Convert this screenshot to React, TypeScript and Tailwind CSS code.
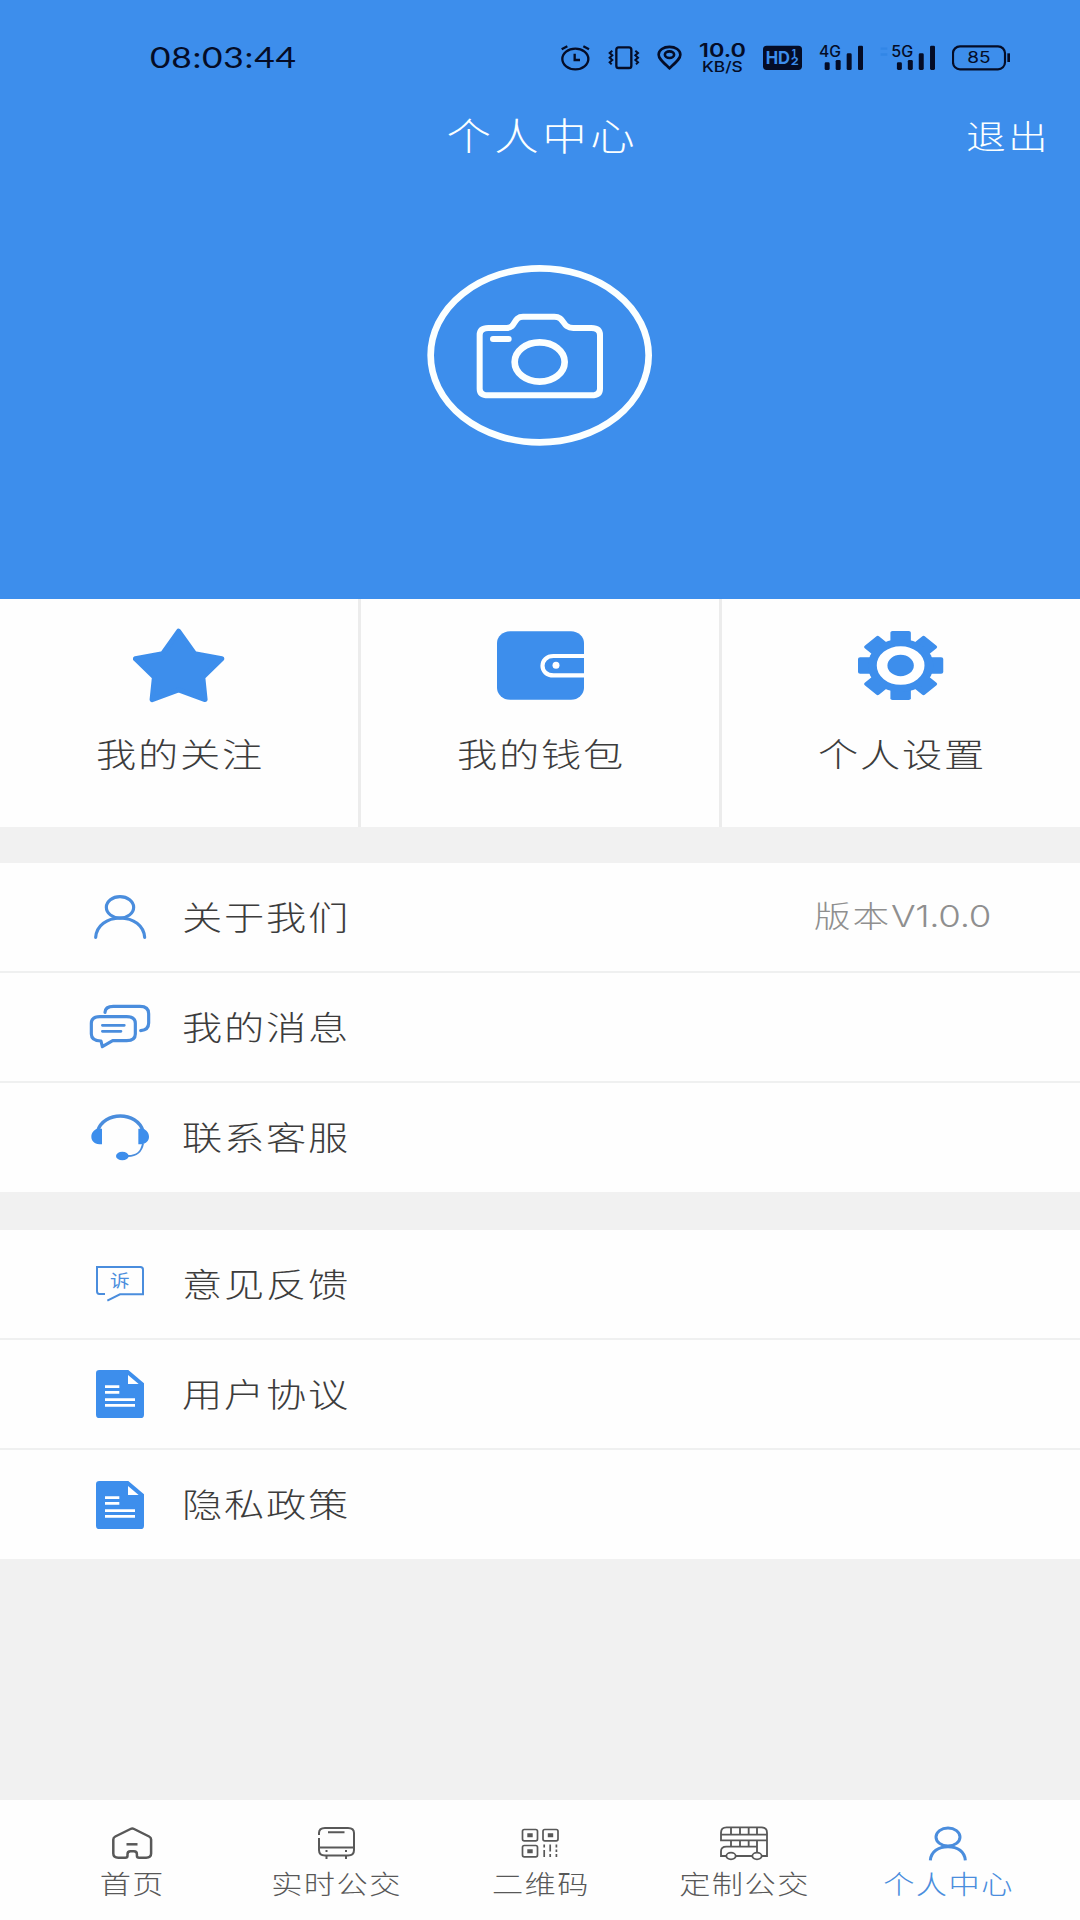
import type { ReactNode } from "react";
import { clsx } from "clsx";

const BLUE = "#3d8eec";

/* ---------- status bar ---------- */

const StatusBar = () => (
  <div className="flex h-[92px] items-center pt-[23px] text-[#040c26]">
    <div className="ml-[150px] w-[410px]">
      <span className="inline-block origin-left scale-x-[1.22] font-['Lato'] text-[29px] leading-none font-normal tracking-[0.6px]">
        08:03:44
      </span>
    </div>
    <div className="flex items-center gap-[17px]">
      <svg width="31" height="32" viewBox="62 66 93 96" fill="none" stroke="currentColor" strokeWidth="7">
        <ellipse cx="108" cy="117" rx="39" ry="31" />
        <path d="M106 101v19h16M67 88l17-9M149 88l-17-9" />
      </svg>
      <svg width="32" height="32" viewBox="203 66 96 96" fill="none" stroke="currentColor" strokeWidth="7">
        <rect x="228" y="82" width="45" height="62" rx="7" />
        <path d="M216 92l-8 7 8 7-8 7 8 7-8 7 6 6M285 92l8 7-8 7 8 7-8 7 8 7-6 6" strokeWidth="6" />
      </svg>
      <svg width="25" height="32" viewBox="349 66 76 96" fill="none" stroke="currentColor" strokeWidth="8">
        <path d="M387 145C368 127 354 116 354 104c0-14 15-24 33-24s33 10 33 24c0 12-14 23-33 41z" />
        <ellipse cx="387" cy="104" rx="14" ry="10" />
      </svg>
      <svg width="47" height="36" viewBox="477 60 141 108" fill="currentColor" className="font-['Inter'] font-semibold">
        <text x="477" y="112" fontSize="56" textLength="141" lengthAdjust="spacingAndGlyphs">10.0</text>
        <text x="486" y="157" fontSize="43" textLength="122" lengthAdjust="spacingAndGlyphs" className="font-medium">KB/S</text>
      </svg>
      <svg width="39" height="32" viewBox="669 66 117 96" className="font-['Inter'] font-bold" fill={BLUE}>
        <rect x="669" y="77" width="117" height="73" rx="11" fill="#040c26" />
        <text x="677" y="132" fontSize="52" textLength="73" lengthAdjust="spacingAndGlyphs">HD</text>
        <text x="755" y="110" fontSize="29">1</text>
        <text x="752" y="136" fontSize="31" textLength="24" lengthAdjust="spacingAndGlyphs">2</text>
      </svg>
      <SignalIcon label="4G" />
      <SignalIcon label="5G" linked />
      <svg width="58" height="32" viewBox="1239 66 174 96" fill="none" stroke="currentColor" strokeWidth="6.500">
        <rect x="1242" y="79" width="156" height="69" rx="21" />
        <path d="M1409 100v26" strokeWidth="8" />
        <text
          x="1285"
          y="130"
          fontSize="47"
          fill="currentColor"
          stroke="none"
          textLength="70"
          lengthAdjust="spacingAndGlyphs"
          className="font-['Inter'] font-normal"
        >
          85
        </text>
      </svg>
    </div>
  </div>
);

const SignalIcon = ({ label, linked }: { label: string; linked?: boolean }) => (
  <svg
    width={linked ? 55 : 44}
    height="32"
    viewBox={linked ? "-34 66 166 96" : "0 66 132 96"}
    fill="currentColor"
  >
    {linked && <path d="M-32 82h20v7h-20zM-32 100h20v7h-20z" fill="#2c80e2" opacity="0.6" />}
    <text
      x="0"
      y="111"
      fontSize="46"
      textLength="66"
      lengthAdjust="spacingAndGlyphs"
      className="font-['Inter'] font-medium"
    >
      {label}
    </text>
    <rect x="17" y="127" width="15" height="23" rx="4" />
    <rect x="50" y="120" width="15" height="30" rx="4" />
    <rect x="83" y="100" width="15" height="50" rx="4" />
    <rect x="117" y="77" width="15" height="73" rx="4" />
  </svg>
);

/* ---------- icons ---------- */

const CameraIcon = () => (
  <svg width="228" height="183" viewBox="77 72 684 549" fill="none" stroke="#fbffff" strokeWidth="18">
    <ellipse cx="418" cy="346" rx="327" ry="261" strokeWidth="20" />
    <path d="M238 285q0-21 26-21h54c30 0 20-34 50-34h94c32 0 22 34 57 34h54q26 0 26 21v161q0 20-26 20H264q-26 0-26-20z" />
    <ellipse cx="418" cy="366" rx="75" ry="59" strokeWidth="20" />
    <path d="M278 297h47" strokeLinecap="round" />
  </svg>
);

const StarIcon = () => (
  <svg width="93" height="76" viewBox="133 627 93 76" fill={BLUE} stroke={BLUE} strokeWidth="5" strokeLinejoin="round">
    <path d="M178.6 631.2l16 22.4 27.2 5.2-19 18.4 2.3 22.4-26.5-9.8-26.5 9.8 2.3-22.4-19-18.4 27.2-5.2z" />
  </svg>
);

const WalletIcon = () => (
  <svg width="87" height="69" viewBox="497 631 87 69" fill={BLUE}>
    <rect x="497" y="631.3" width="87" height="68.4" rx="13" ry="12" />
    <path d="M585 656h-31.500c-7 0-11 4.500-11 9.800s4 9.600 11 9.600H585" stroke="#fff" strokeWidth="4.200" />
    <circle cx="556" cy="665.200" r="3.500" fill="#fff" />
  </svg>
);

const GearIcon = () => (
  <svg width="87" height="69" viewBox="-98 -100 200 200" preserveAspectRatio="none" fill={BLUE}>
    <g transform="scale(0.98 1)">
      {[0, 45, 90, 135].map((angle) => (
        <rect key={angle} x="-24" y="-100" width="48" height="200" rx="5" transform={`rotate(${angle})`} />
      ))}
      <circle r="77" />
      <circle r="43.500" fill="none" stroke="#fff" strokeWidth="25" />
    </g>
  </svg>
);

const UserIcon = () => (
  <svg width="56" height="45" viewBox="96 104 168 135" fill="none" stroke="#4a8ddd" strokeWidth="9.500">
    <ellipse cx="180" cy="141" rx="41" ry="32" />
    <path d="M107 231c3-36 34-57 73-58 41 1 71 22 74 58" strokeLinecap="round" />
  </svg>
);

const MessageIcon = () => (
  <svg
    width="64"
    height="46"
    viewBox="84 432 192 138"
    fill="none"
    stroke="#4a8ddd"
    strokeWidth="9.500"
    strokeLinecap="round"
    strokeLinejoin="round"
  >
    <path d="M135 457q1-18 25-18h80q26 0 26 22v28q0 21-24 23" />
    <path d="M120 470h80q26 0 26 20v32q0 20-26 20h-42l-31 18-4-17q-29 0-29-21v-32q0-20 26-20z" />
    <path d="M127 496h66M127 514h56" strokeWidth="8" />
  </svg>
);

const HeadsetIcon = () => (
  <svg width="60" height="50" viewBox="90 758 180 150" fill={BLUE}>
    <path d="M113 812c18-60 118-60 136 0" fill="none" stroke="#4a8ddd" strokeWidth="10" />
    <path d="M126 805v47h-8c-16-2-24-11-24-23s8-20 17-24zM235 805v47h8c16-2 24-11 24-23s-8-20-17-24z" />
    <path d="M249 850c-5 25-17 37-45 37" fill="none" stroke="#4a8ddd" strokeWidth="6" />
    <ellipse cx="187" cy="887" rx="19" ry="13" />
  </svg>
);

const FeedbackIcon = () => (
  <svg width="50" height="39" viewBox="105 135 150 117" fill="none" stroke="#4a8ddd" strokeWidth="6">
    <path d="M135 222h-17q-7 0-7-8v-73h130q8 0 8 8v74h-69l-38 19" />
    <text
      x="150"
      y="201"
      fontSize="50"
      fill="#4a8ddd"
      stroke="none"
      textLength="59"
      lengthAdjust="spacingAndGlyphs"
      className="font-['Noto_Sans_CJK_SC',sans-serif] font-normal"
    >
      诉
    </text>
  </svg>
);

const DocIcon = () => (
  <svg width="48" height="48" viewBox="108 450 144 144">
    <path d="M118 450h87l47 40v94q0 10-10 10H118q-10 0-10-10V460q0-10 10-10z" fill={BLUE} />
    <path d="M204 465v27h32z" fill="#fff" />
    <path d="M135 500h43M135 517h43M135 539h90M135 556h90" stroke="#fff" strokeWidth="8" />
  </svg>
);

const HomeIcon = () => (
  <svg width="44" height="36" viewBox="110 1825 44 36" fill="none" stroke="currentColor" strokeWidth="2.500">
    <path d="M130.500 1829q1.800-.9 3.600 0l15 7.500q2 1 2 3v14q0 4.200-5 4.200h-7q-2.200 0-2.200-2v-1.500q0-2.900-3-2.900h-3.400q-3 0-3 2.900v1.500q0 2-2.200 2h-7q-5 0-5-4.200v-14q0-2 2-3z" />
    <path d="M126.500 1844.300h11" />
  </svg>
);

const BusIcon = () => (
  <svg width="44" height="36" viewBox="314 1825 44 36" fill="none" stroke="currentColor" strokeWidth="2">
    <path d="M319 1835v-2q0-5 6-5h23q6 0 6 5v17q0 5.500-6 5.500h-23q-6 0-6-5.500v-12" />
    <path d="M328 1832.300h16.500M319 1847.400h35M326.500 1856v3M346 1856v3" />
    <path d="M325.500 1851h2M345 1851h2" />
  </svg>
);

const QrIcon = () => (
  <svg width="44" height="36" viewBox="518 1825 44 36" fill="none" stroke="currentColor" strokeWidth="1.700">
    <rect x="522.500" y="1829.500" width="15" height="11.300" rx="1.800" />
    <rect x="543" y="1829.500" width="15" height="11.300" rx="1.800" />
    <rect x="522.500" y="1845.500" width="15" height="11.300" rx="1.800" />
    <path d="M527.300 1835.200h5.400M547.800 1835.200h5.400M527.300 1851.200h5.400" strokeWidth="4" />
    <path d="M544.200 1844.500v3M544.200 1850v7M550.200 1844.500v7M550.200 1854v3M556.400 1844.500v3M556.400 1849.500v2.500M556.400 1854v3" />
  </svg>
);

const DeckerIcon = () => (
  <svg width="50" height="36" viewBox="357 133 150 108" fill="none" stroke="currentColor" strokeWidth="5.500">
    <path d="M378 226h-15v-14q0-14 16-14h92M408 226h48M486 226h15v-70q0-16-17-16H380q-17 0-17 16v23h138M363 162h138" />
    <path d="M393 140v22M420 140v22M446 140v22M471 140v22M393 179v19M420 179v19M446 179v19M471 179v36" />
    <ellipse cx="393" cy="226" rx="14" ry="10" />
    <ellipse cx="471" cy="226" rx="14" ry="10" />
  </svg>
);

const ProfileIcon = () => (
  <svg width="44" height="36" viewBox="979 133 132 108" fill="none" stroke="#4a8ddd" strokeWidth="9">
    <ellipse cx="1045" cy="169" rx="36" ry="27" />
    <path d="M992 239c2-26 24-41 53-41s50 15 52 41" />
  </svg>
);

/* ---------- sections ---------- */

interface Item {
  label: string;
  icon: ReactNode;
  extra?: ReactNode;
}

const shortcuts: Item[] = [
  { label: "我的关注", icon: <StarIcon /> },
  { label: "我的钱包", icon: <WalletIcon /> },
  { label: "个人设置", icon: <GearIcon /> },
];

const aboutRows: Item[] = [
  {
    label: "关于我们",
    icon: <UserIcon />,
    extra: (
      <span className="inline-block origin-right scale-x-[1.22] pb-[4px] text-[30px] leading-none text-[#8f8f8f]">
        <span className="tracking-[1.5px]">版本</span>
        <span className="font-['Inter'] tracking-[-0.3px]">V1.0.0</span>
      </span>
    ),
  },
  { label: "我的消息", icon: <MessageIcon /> },
  { label: "联系客服", icon: <HeadsetIcon /> },
];

const policyRows: Item[] = [
  { label: "意见反馈", icon: <FeedbackIcon /> },
  { label: "用户协议", icon: <DocIcon /> },
  { label: "隐私政策", icon: <DocIcon /> },
];

const tabs: (Item & { active?: boolean })[] = [
  { label: "首页", icon: <HomeIcon /> },
  { label: "实时公交", icon: <BusIcon /> },
  { label: "二维码", icon: <QrIcon /> },
  { label: "定制公交", icon: <DeckerIcon /> },
  { label: "个人中心", icon: <ProfileIcon />, active: true },
];

const MenuGroup = ({ rows }: { rows: Item[] }) => (
  <div className="grid h-[329px] grid-rows-[110px_110px_109px] divide-y-2 divide-[#eff0f0] bg-[#fefefe]">
    {rows.map((row) => (
      <div key={row.label} className="flex items-center pr-[89px]">
        <div className="ml-[80px] flex w-20 justify-center">{row.icon}</div>
        <span className="ml-[21.5px] inline-block origin-left scale-x-[1.22] pb-[2px] text-[33px] leading-none tracking-[1.4px]">
          {row.label}
        </span>
        {row.extra && <div className="ml-auto">{row.extra}</div>}
      </div>
    ))}
  </div>
);

export default function App() {
  return (
    <div className="flex h-[1920px] w-[1080px] flex-col overflow-hidden bg-[#f1f1f1] font-['Noto_Sans_CJK_SC',sans-serif] font-light whitespace-nowrap text-[#3c3c3c]">
      <header className="h-[599px] bg-[#3d8eec]">
        <StatusBar />
        <div className="grid h-[92px] grid-cols-[1fr_auto_1fr] items-center pb-[5px] text-[#fbffff]">
          <h1 className="col-start-2 scale-x-[1.17] pb-[3px] pl-[4px] text-[38px] leading-none tracking-[3px]">
            个人中心
          </h1>
          <span className="mr-[30px] origin-right scale-x-[1.2] justify-self-end text-[33px] leading-none tracking-[2px]">
            退出
          </span>
        </div>
        <div className="mt-[80px] flex justify-center">
          <CameraIcon />
        </div>
      </header>

      <div className="grid h-[228px] grid-cols-[361px_361px_1fr] divide-x-3 divide-[#ececec] bg-[#fefefe]">
        {shortcuts.map((item) => (
          <div key={item.label} className="flex flex-col items-center">
            <div className="mt-[28px] flex h-[76px] items-center">{item.icon}</div>
            <span className="mt-[34px] scale-x-[1.22] pl-[2px] text-[33px] leading-none tracking-[1.4px]">
              {item.label}
            </span>
          </div>
        ))}
      </div>

      <div className="mt-9">
        <MenuGroup rows={aboutRows} />
      </div>
      <div className="mt-[38px]">
        <MenuGroup rows={policyRows} />
      </div>

      <nav className="mt-auto grid h-[120px] grid-cols-5 bg-[#fefefe] px-[30px] text-[#585858]">
        {tabs.map((tab) => (
          <div key={tab.label} className={clsx("flex flex-col items-center pt-[25px]", tab.active && "text-[#4a8ddd]")}>
            {tab.icon}
            <span className="mt-[9px] scale-x-[1.2] pl-[1px] text-[26px] leading-none tracking-[1.2px]">
              {tab.label}
            </span>
          </div>
        ))}
      </nav>
    </div>
  );
}
